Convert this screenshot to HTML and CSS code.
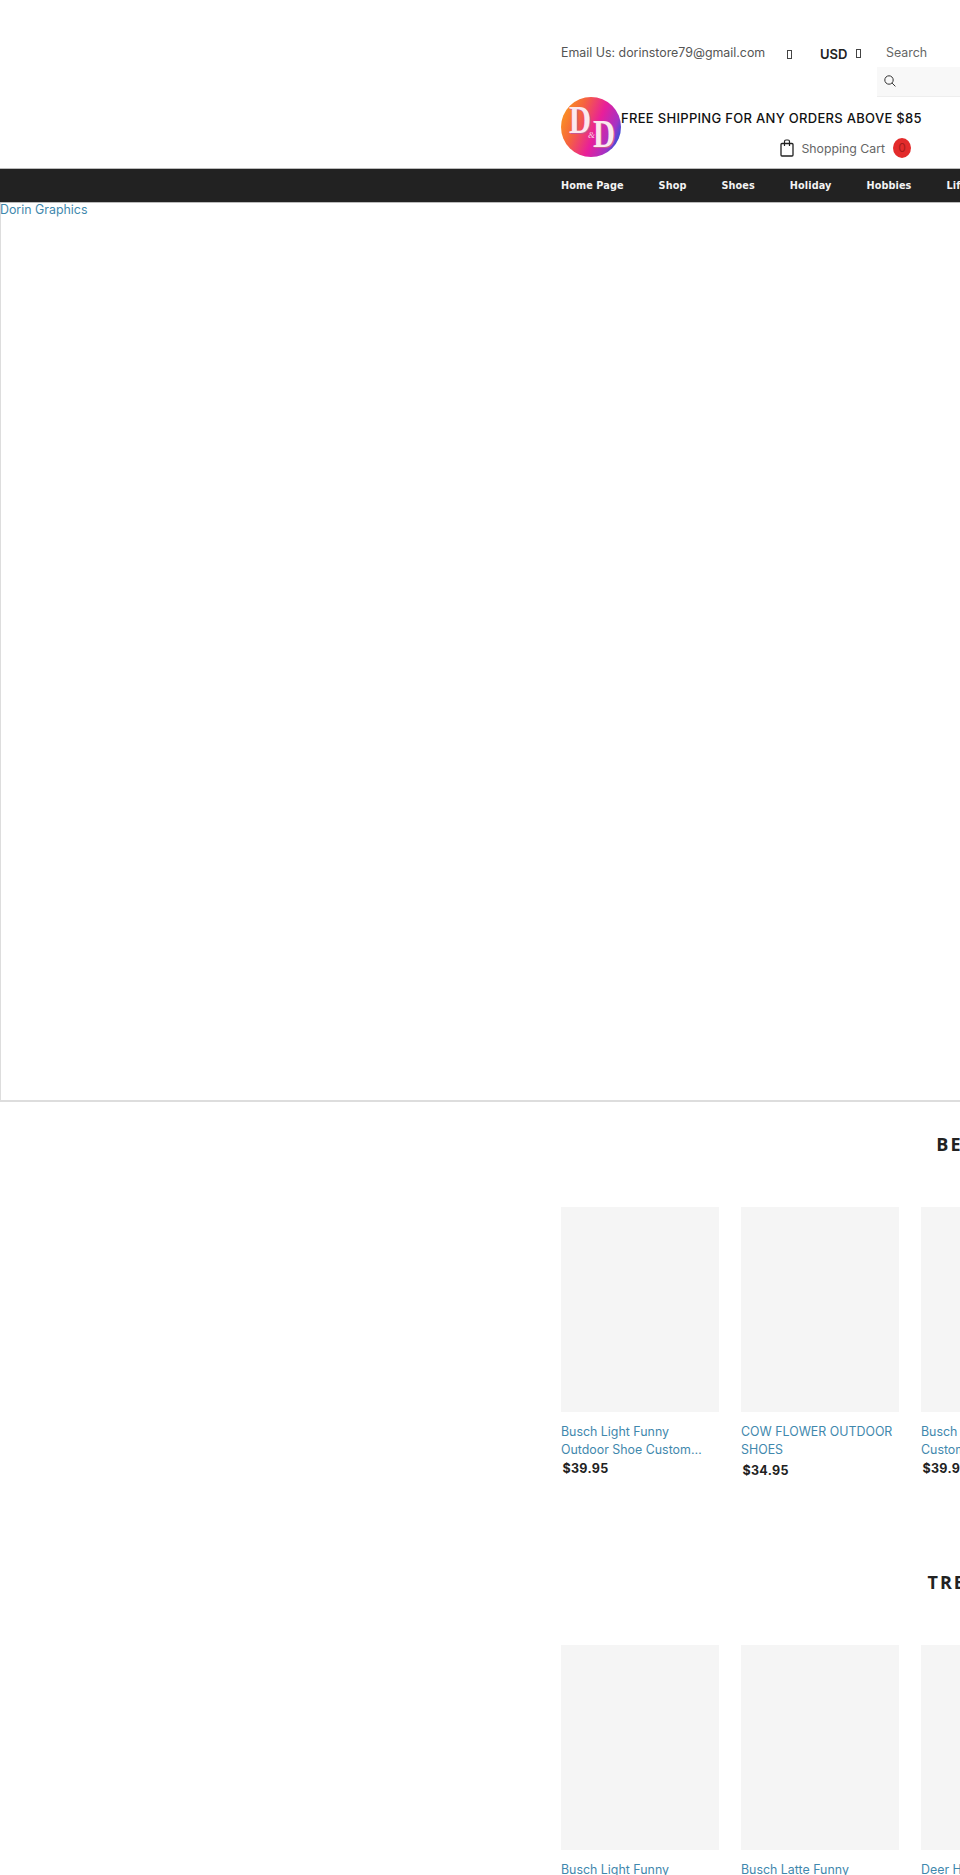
FILE: index.html
```html
<!DOCTYPE html>
<html lang="en">
<head>
  <meta charset="UTF-8">
  <title>Dorin Graphics</title>
  <link rel="stylesheet" href="styles.css">
</head>
<body>
  <div class="page">
    <header class="site-header">
      <div class="top-row">
        <span class="email">Email Us: dorinstore79@gmail.com</span>
        <span class="tofu tofu-first"></span>
        <span class="currency">USD</span>
        <span class="tofu tofu-second"></span>
        <div class="search">
          <label class="search-label">Search</label>
          <div class="search-box">
            <svg class="search-icon" viewBox="0 0 14 14" width="14" height="14">
              <circle cx="6" cy="6" r="4.2" fill="none" stroke="#333" stroke-width="1"/>
              <line x1="9.1" y1="9.1" x2="12.4" y2="12.4" stroke="#333" stroke-width="1"/>
            </svg>
          </div>
        </div>
      </div>
      <div class="brand-row">
        <svg class="logo" viewBox="0 0 60 60" width="60" height="60">
          <defs>
            <linearGradient id="logoFill" x1="0" y1="0.2" x2="1" y2="0.6">
              <stop offset="0" stop-color="#fb9a1c"/>
              <stop offset="0.3" stop-color="#f5633f"/>
              <stop offset="0.62" stop-color="#e81f9a"/>
              <stop offset="0.88" stop-color="#a532c4"/>
              <stop offset="1" stop-color="#3b4fd6"/>
            </linearGradient>
          </defs>
          <circle cx="30" cy="30" r="30" fill="url(#logoFill)"/>
          <text x="9" y="37" class="logo-letter logo-back" textLength="22" lengthAdjust="spacingAndGlyphs">D</text>
          <text x="8" y="36" class="logo-letter" textLength="22" lengthAdjust="spacingAndGlyphs">D</text>
          <text x="33" y="51" class="logo-letter logo-back" textLength="22" lengthAdjust="spacingAndGlyphs">D</text>
          <text x="32" y="50" class="logo-letter" textLength="22" lengthAdjust="spacingAndGlyphs">D</text>
          <text x="27" y="41" class="logo-amp">&amp;</text>
        </svg>
        <div class="brand-text">
          <div class="shipping">FREE SHIPPING FOR ANY ORDERS ABOVE $85</div>
          <div class="cart">
            <svg class="cart-icon" viewBox="0 0 14 18" width="14" height="18">
              <rect x="1" y="4.5" width="12" height="12.5" rx="1" fill="none" stroke="#222" stroke-width="1.3"/>
              <path d="M4.5 7V2.5a1.5 1.5 0 0 1 1.5-1.5h2a1.5 1.5 0 0 1 1.5 1.5V7" fill="none" stroke="#222" stroke-width="1.2"/>
            </svg>
            <span class="cart-label">Shopping Cart</span>
            <span class="cart-count">0</span>
          </div>
        </div>
      </div>
    </header>

    <nav class="main-nav">
      <a href="#">Home Page</a>
      <a href="#">Shop</a>
      <a href="#">Shoes</a>
      <a href="#">Holiday</a>
      <a href="#">Hobbies</a>
      <a href="#">Lifestyle</a>
    </nav>

    <a href="#" class="banner">Dorin Graphics</a>

    <section class="products products-best">
      <h2 class="section-title">BEST SELLERS</h2>
      <div class="product-row">
        <div class="product">
          <div class="product-img"></div>
          <a href="#" class="product-name clamp">Busch Light Funny Outdoor Shoe Custom Name Shoes For Men</a>
          <div class="price">$39.95</div>
        </div>
        <div class="product">
          <div class="product-img"></div>
          <a href="#" class="product-name">COW FLOWER OUTDOOR SHOES</a>
          <div class="price price-low">$34.95</div>
        </div>
        <div class="product">
          <div class="product-img"></div>
          <a href="#" class="product-name clamp">Busch Light Outdoor Shoe Custom Name Shoes For Men</a>
          <div class="price">$39.95</div>
        </div>
      </div>
    </section>

    <section class="products products-trending">
      <h2 class="section-title">TRENDING NOW</h2>
      <div class="product-row">
        <div class="product">
          <div class="product-img"></div>
          <a href="#" class="product-name clamp">Busch Light Funny Outdoor Shoe Custom Name Shoes For Men</a>
        </div>
        <div class="product">
          <div class="product-img"></div>
          <a href="#" class="product-name clamp">Busch Latte Funny Outdoor Shoe Custom Name</a>
        </div>
        <div class="product">
          <div class="product-img"></div>
          <a href="#" class="product-name clamp">Deer Hunting Custom Name Shoes</a>
        </div>
      </div>
    </section>
  </div>
</body>
</html>
```

FILE: styles.css
```css
html, body {
  margin: 0;
  height: 100%;
  overflow: hidden;
  background: #fff;
}
body {
  font-family: 'Inter', 'Liberation Sans', sans-serif;
  font-size: 12.4px;
  color: #444;
}
a {
  text-decoration: none;
}
.page {
  width: 2024px;
}
.site-header {
  padding: 43px 0 0 561px;
  height: 125px;
}
.top-row {
  display: flex;
  align-items: flex-start;
  height: 54px;
}
.email {
  width: 226px;
  margin-top: 1px;
  line-height: 18px;
  color: #555;
}
.tofu {
  display: block;
  box-sizing: border-box;
  width: 5px;
  height: 9px;
  margin-top: 7px;
  border: 1px solid #444;
}
.tofu-second {
  margin-top: 6px;
}
.currency {
  margin: 2px 0 0 28px;
  width: 36px;
  line-height: 18px;
  font-weight: 600;
  font-size: 13px;
  color: #222;
}
.search {
  margin-left: 16px;
  width: 200px;
}
.search-label {
  display: block;
  margin-top: 1px;
  padding-left: 9px;
  line-height: 18px;
  color: #666;
}
.search-box {
  display: flex;
  align-items: center;
  box-sizing: border-box;
  height: 30px;
  margin-top: 5px;
  padding: 0 0 2px 6px;
  background: #f8f8f8;
  border-bottom: 1px solid #eee;
}
.brand-row {
  display: flex;
}
.logo {
  display: block;
  flex: none;
}
.logo-letter {
  font-family: 'Liberation Serif', serif;
  font-weight: 700;
  font-size: 40px;
  fill: #fbe9ee;
}
.logo-back {
  fill: #c9578f;
}
.logo-amp {
  font-family: 'Liberation Serif', serif;
  font-style: italic;
  font-size: 9px;
  fill: #f7d9e6;
}
.brand-text {
  width: 300px;
}
.shipping {
  margin-top: 12px;
  line-height: 18px;
  font-weight: 500;
  font-size: 13px;
  letter-spacing: 0.3px;
  color: #111;
  white-space: nowrap;
}
.cart {
  display: flex;
  align-items: center;
  justify-content: flex-end;
  margin-top: 11px;
  padding-right: 10px;
}
.cart-label {
  margin: 0 8px 0 7px;
  font-size: 12.3px;
  color: #666;
}
.cart-count {
  width: 18px;
  height: 20px;
  border-radius: 50%;
  background: #e32b2b;
  color: #a81c1c;
  font-size: 12px;
  line-height: 20px;
  text-align: center;
}
.main-nav {
  display: flex;
  box-sizing: border-box;
  height: 35px;
  padding-left: 543.5px;
  background: #222;
  border-top: 1px solid #bbb;
  border-bottom: 1px solid #bbb;
}
.main-nav a {
  padding: 0 17.5px;
  font-family: 'DejaVu Sans', sans-serif;
  font-weight: 700;
  font-size: 9.7px;
  letter-spacing: 0.1px;
  line-height: 34px;
  color: #f4f4f4;
}
.banner {
  display: block;
  box-sizing: border-box;
  height: 899px;
  border: 1px solid #ddd;
  border-bottom-width: 2px;
  border-top: 0;
  font-size: 12.4px;
  line-height: 14px;
  text-indent: -1px;
  color: #3f88ad;
}
.products {
  padding-left: 561px;
}
.section-title {
  margin: 0 0 0 -561px;
  font-family: 'Open Sans', sans-serif;
  font-weight: 700;
  font-size: 18px;
  line-height: 24px;
  letter-spacing: 2px;
  text-align: center;
  color: #222;
}
.products-best {
  padding-top: 30px;
}
.products-best .section-title {
  margin-left: -569px;
}
.products-trending {
  padding-top: 90px;
}
.product-row {
  display: flex;
  gap: 22px;
  margin-top: 51px;
}
.product {
  width: 158px;
  flex: none;
}
.product-img {
  height: 205px;
  background: #f5f5f5;
}
.product-name {
  display: block;
  margin-top: 11px;
  font-size: 12.4px;
  line-height: 18px;
  color: #3f88ad;
}
.clamp {
  display: -webkit-box;
  -webkit-box-orient: vertical;
  -webkit-line-clamp: 2;
  overflow: hidden;
}
.price {
  margin-top: 1px;
  padding-left: 1.5px;
  font-weight: 700;
  font-size: 12.5px;
  line-height: 18px;
  letter-spacing: 0.3px;
  color: #222;
}
.price-low {
  margin-top: 3px;
}
```
